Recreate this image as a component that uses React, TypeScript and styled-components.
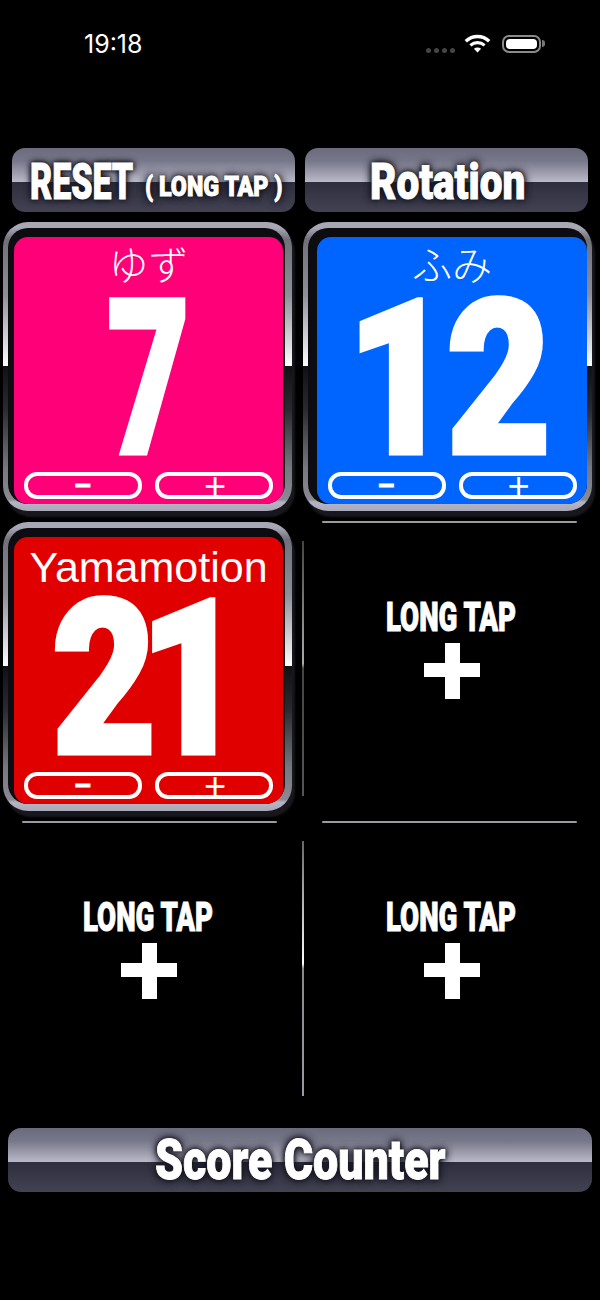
import styled, { createGlobalStyle } from "styled-components";

const GlobalStyle = createGlobalStyle`
  html, body {
    margin: 0;
    padding: 0;
    background: #000;
  }
`;

const HEAVY = `"Roboto", "Liberation Sans", sans-serif`;

const Screen = styled.div`
  width: 600px;
  height: 1300px;
  overflow: hidden;
  background: #000;
  color: #fff;
  display: flex;
  flex-direction: column;
`;

const StatusBar = styled.div`
  height: 88px;
  padding: 0 59px 0 84px;
  display: flex;
  align-items: center;
  justify-content: space-between;
`;

const Time = styled.span`
  font-family: "Inter", sans-serif;
  font-size: 25px;
  font-weight: 400;
`;

const StatusIcons = styled.div`
  display: flex;
  align-items: center;
  gap: 10px;
`;

const SignalDots = styled.div`
  display: flex;
  gap: 3px;
  margin: 13px -1px 0 0;
`;

const SignalDot = styled.i`
  width: 5px;
  height: 5px;
  border-radius: 50%;
  background: #454545;
`;

const Battery = styled.div`
  position: relative;
  width: 39px;
  height: 18px;
  box-sizing: border-box;
  margin-left: 1px;
  padding: 2px;
  border: 2px solid #8a8a8a;
  border-radius: 7px;

  &::before {
    content: "";
    display: block;
    height: 100%;
    border-radius: 4px;
    background: #fff;
  }

  &::after {
    content: "";
    position: absolute;
    right: -6px;
    top: 3px;
    width: 3px;
    height: 7px;
    border-radius: 0 3px 3px 0;
    background: #777;
  }
`;

const ButtonRow = styled.div`
  margin: 60px 12px 0;
  display: grid;
  grid-template-columns: 283px 283px;
  gap: 10px;
`;

const MetalButton = styled.div<{ $justify?: string }>`
  height: 64px;
  border-radius: 13px;
  display: flex;
  align-items: center;
  justify-content: ${(p) => p.$justify ?? "center"};
  background: linear-gradient(
    180deg,
    #6b6b7d 0%,
    #77778a 20%,
    #b9b9c8 53%,
    #2e2e3e 53%,
    #424252 100%
  );
`;

const ResetButton = styled(MetalButton)`
  padding-left: 18px;
  gap: 12px;
`;

// Heavy condensed lettering: the text is squeezed from its left edge, so $width is the drawn width
const Heavy = styled.span<{ $size: number; $width: number; $squeeze: number; $drop?: number; $glow?: boolean }>`
  display: block;
  width: ${(p) => p.$width}px;
  flex: none;
  margin-top: ${(p) => p.$drop ?? 0}px;
  font-family: ${HEAVY};
  font-weight: 900;
  font-size: ${(p) => p.$size}px;
  line-height: 1;
  white-space: nowrap;
  color: #fff;
  -webkit-text-stroke: 1px #fff;
  transform-origin: left center;
  transform: scaleX(${(p) => p.$squeeze});
  text-shadow: ${(p) => (p.$glow ? "0 0 5px #15151f, 0 0 9px #15151f, 0 0 9px #15151f" : "none")};
`;

const BoardGrid = styled.div`
  margin: 10px 0 0 3px;
  display: grid;
  grid-template-columns: 292px 292px;
  grid-auto-rows: 292px;
  gap: 8px;
`;

const MetalFrame = styled.div<{ $right?: boolean }>`
  width: 289px;
  height: 289px;
  box-sizing: border-box;
  padding: ${(p) => (p.$right ? "6px 5px 7px 5px" : "6px 7px 7px 5px")};
  border-radius: 25px;
  box-shadow: 3px 6px 2px #17171d;
  background: linear-gradient(
    180deg,
    #a8a8b4 0%,
    #a8a8b4 2%,
    #70707a 6%,
    #8e8e98 25%,
    #fff 50%,
    #111115 50%,
    #2a2a30 65%,
    #77777f 85%,
    #8a8a94 96%,
    #b5b5c2 97%,
    #a8a8b8 100%
  );
`;

const Recess = styled.div<{ $right?: boolean }>`
  height: 100%;
  box-sizing: border-box;
  padding: ${(p) => (p.$right ? "9px 0 0 9px" : "9px 2px 0 6px")};
  border-radius: 20px;
  overflow: hidden;
  background: #0c0c11;
`;

const ScorePanel = styled.div<{ $color: string }>`
  height: 100%;
  border-radius: 14px;
  display: flex;
  flex-direction: column;
  background: ${(p) => p.$color};
`;

const PlayerName = styled.div<{ $latin?: boolean }>`
  height: 54px;
  padding-top: ${(p) => (p.$latin ? 6 : 3)}px;
  box-sizing: border-box;
  display: flex;
  align-items: center;
  justify-content: center;
  font-family: "Liberation Sans", "Noto Sans CJK JP", sans-serif;
  font-size: ${(p) => (p.$latin ? 43 : 40)}px;
  font-weight: ${(p) => (p.$latin ? 400 : 300)};
  line-height: 1;
  white-space: nowrap;
`;

const ScoreArea = styled.div`
  height: 181px;
  padding-bottom: 4px;
  box-sizing: border-box;
  display: flex;
  align-items: center;
  justify-content: center;
`;

const ScoreValue = styled.span<{ $track: number; $shift: number; $squeeze: number }>`
  font-family: ${HEAVY};
  font-weight: 900;
  font-size: 215px;
  line-height: 0.8;
  letter-spacing: ${(p) => p.$track}px;
  -webkit-text-stroke: 5px #fff;
  transform: translateX(${(p) => p.$shift}px) scaleX(${(p) => p.$squeeze});
`;

const StepRow = styled.div`
  display: flex;
  justify-content: center;
  gap: 13px;
`;

const StepButton = styled.div`
  width: 118px;
  height: 27px;
  box-sizing: border-box;
  border: 4px solid #fff;
  border-radius: 13px;
  display: flex;
  align-items: center;
  justify-content: center;
  font-family: "Liberation Sans", sans-serif;
  line-height: 0;
`;

const MinusSign = styled.span`
  font-size: 28px;
  font-weight: 700;
  -webkit-text-stroke: 1px #fff;
`;

const PlusSign = styled.span`
  font-size: 38px;
  font-weight: 400;
  transform: translateX(1px);
`;

const EmptySlot = styled.div<{ $right?: boolean }>`
  position: relative;
  padding: 76px 0 0 ${(p) => (p.$right ? 6 : 0)}px;
  display: flex;
  flex-direction: column;
  align-items: center;
`;

const EdgeTop = styled.i`
  position: absolute;
  top: -1px;
  left: 19px;
  width: 255px;
  height: 2px;
  border-radius: 2px;
  background: #9a9aa0;
`;

const EdgeLeft = styled.i<{ $soft?: boolean }>`
  position: absolute;
  top: 19px;
  left: -1px;
  width: 2px;
  height: 255px;
  background: ${(p) =>
    p.$soft
      ? "linear-gradient(180deg, #444 0%, #aaa 48%, #444 50%, #555 100%)"
      : "linear-gradient(180deg, #666 0%, #fff 48%, #888 50%, #9a9aa4 100%)"};
`;

const SlotLabel = styled.div`
  width: 132px;
  margin-bottom: 5px;
`;

const PlusMark = styled.svg`
  display: block;
  width: 56px;
  height: 56px;
`;

const FooterBar = styled(MetalButton)`
  margin: 14px 8px 0;
`;

const WifiGlyph = styled.svg`
  display: block;
  margin-top: -2px;
`;

function WifiIcon() {
  return (
    <WifiGlyph width="27" height="19" viewBox="0 0 27 19" fill="none">
      <path d="M1.8 7.2 C8.4 .9 18.6 .9 25.2 7.2" stroke="#fff" strokeWidth="3.4" />
      <path d="M6.4 11.4 C10.6 7.8 16.4 7.8 20.6 11.4" stroke="#fff" strokeWidth="3.2" />
      <path d="M9.9 14.8 C12 13.2 15 13.2 17.1 14.8 L13.5 18.6 Z" fill="#fff" />
    </WifiGlyph>
  );
}

type Player = {
  name: string;
  latin?: boolean;
  score: number;
  color: string;
  right?: boolean;
  track: number;
  shift: number;
  squeeze: number;
};

const players: Player[] = [
  { name: "ゆず", score: 7, color: "#ff0078", track: 0, shift: 0, squeeze: 0.66 },
  { name: "ふみ", score: 12, color: "#0064ff", right: true, track: -6, shift: -5, squeeze: 0.84 },
  { name: "Yamamotion", latin: true, score: 21, color: "#e10000", track: -20, shift: -9, squeeze: 0.84 },
];

function ScoreCard({ player }: { player: Player }) {
  return (
    <MetalFrame $right={player.right}>
      <Recess $right={player.right}>
        <ScorePanel $color={player.color}>
          <PlayerName $latin={player.latin}>{player.name}</PlayerName>
          <ScoreArea>
            <ScoreValue $track={player.track} $shift={player.shift} $squeeze={player.squeeze}>
              {player.score}
            </ScoreValue>
          </ScoreArea>
          <StepRow>
            <StepButton>
              <MinusSign>−</MinusSign>
            </StepButton>
            <StepButton>
              <PlusSign>+</PlusSign>
            </StepButton>
          </StepRow>
        </ScorePanel>
      </Recess>
    </MetalFrame>
  );
}

function AddSlot({ top, left, soft, right }: { top?: boolean; left?: boolean; soft?: boolean; right?: boolean }) {
  return (
    <EmptySlot $right={right}>
      {top && <EdgeTop />}
      {left && <EdgeLeft $soft={soft} />}
      <SlotLabel>
        <Heavy $size={40} $width={132} $squeeze={0.69}>
          LONG TAP
        </Heavy>
      </SlotLabel>
      <PlusMark viewBox="0 0 56 56">
        <path d="M21 0h15v20h20v14H36v22H21V34H0V20h21z" fill="#fff" />
      </PlusMark>
    </EmptySlot>
  );
}

export default function App() {
  return (
    <Screen>
      <GlobalStyle />
      <StatusBar>
        <Time>19:18</Time>
        <StatusIcons>
          <SignalDots>
            <SignalDot />
            <SignalDot />
            <SignalDot />
            <SignalDot />
          </SignalDots>
          <WifiIcon />
          <Battery />
        </StatusIcons>
      </StatusBar>

      <ButtonRow>
        <ResetButton $justify="flex-start">
          <Heavy $size={50} $width={103} $squeeze={0.68} $drop={3} $glow>
            RESET
          </Heavy>
          <Heavy $size={28} $width={137} $squeeze={0.83} $drop={14} $glow>
            ( LONG TAP )
          </Heavy>
        </ResetButton>
        <MetalButton>
          <Heavy $size={50} $width={154} $squeeze={0.81} $drop={3} $glow>
            Rotation
          </Heavy>
        </MetalButton>
      </ButtonRow>

      <BoardGrid>
        <ScoreCard player={players[0]} />
        <ScoreCard player={players[1]} />
        <ScoreCard player={players[2]} />
        <AddSlot top left soft right />
        <AddSlot top />
        <AddSlot top left right />
      </BoardGrid>

      <FooterBar>
        <Heavy $size={56} $width={291} $squeeze={0.8} $glow>
          Score Counter
        </Heavy>
      </FooterBar>
    </Screen>
  );
}
